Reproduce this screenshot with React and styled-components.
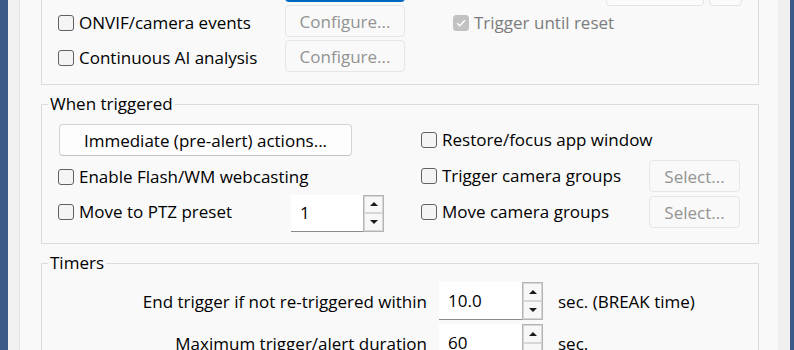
import React from "react";
import styled, { createGlobalStyle } from "styled-components";

const Global = createGlobalStyle`
  html, body { margin: 0; padding: 0; background: #f9f9f9; }
  body {
    font-family: "Open Sans", "Noto Sans", sans-serif;
    font-size: 17px;
    color: #000;
  }
  * { box-sizing: border-box; }
`;

const Window = styled.div`
  display: flex;
  width: 794px;
  height: 350px;
  overflow: hidden;
`;

const Edge = styled.div`
  flex: none;
  width: ${(p) => p.$w}px;
  background: ${(p) => p.$bg};
  ${(p) => (p.$line ? `border-${p.$line}: 1px solid #e4e4e4;` : "")}
`;

const Panel = styled.div`
  flex: 1;
  display: flex;
  flex-direction: column;
  gap: 7px;
  padding: 0 19px 0 21px;
  background: #f9f9f9;
`;

const Group = styled.fieldset`
  margin: 0;
  margin-top: ${(p) => p.$top || 0}px;
  min-width: 0;
  border: 1px solid #dcdcdc;
  padding: ${(p) => p.$pad};
`;

const Legend = styled.legend`
  line-height: 24px;
  padding: 0 2px;
  margin-left: -10px;
`;

const TopGrid = styled.div`
  display: grid;
  grid-template-columns: 227px 168px 153px auto;
  grid-auto-rows: 32px;
  row-gap: 3px;
  align-items: center;
`;

const WhenGrid = styled.div`
  display: grid;
  grid-template-columns: 363px auto;
  grid-auto-rows: 32px;
  row-gap: 4px;
  align-items: center;
`;

const TimerGrid = styled.div`
  display: grid;
  grid-template-columns: 369px 104px auto;
  grid-auto-rows: 38px;
  column-gap: 12px;
  row-gap: 4px;
  align-items: center;
`;

const Line = styled.div`
  display: flex;
  align-items: center;
`;

const Slot = styled.div`
  flex: none;
  width: ${(p) => p.$w}px;
`;

const Label = styled.label`
  display: inline-flex;
  align-items: center;
  gap: 5px;
  white-space: nowrap;
  line-height: 22px;
  margin-top: ${(p) => p.$nudge || 0}px;
  color: ${(p) => (p.$disabled ? "#7c7c7c" : "#000")};
`;

const Box = styled.span`
  flex: none;
  width: 16px;
  height: 16px;
  border-radius: 3px;
  display: flex;
  align-items: center;
  justify-content: center;
  border: 1px solid ${(p) => (p.$disabled ? "#c2c2c2" : "#616161")};
  background: ${(p) => (p.$disabled ? "#c2c2c2" : "#f4f4f4")};
`;

const Button = styled.button`
  height: 32px;
  width: ${(p) => p.$w}px;
  margin-left: ${(p) => p.$ml || 0}px;
  padding: 0;
  border-radius: 4px;
  font: inherit;
  line-height: 1;
  border: 1px solid ${(p) => (p.$disabled ? "#e6e6e6" : "#d3d3d3")};
  border-bottom-color: ${(p) => (p.$disabled ? "#e6e6e6" : "#c2c2c2")};
  background: ${(p) => (p.$disabled ? "#f9f9f9" : "#fdfdfd")};
  color: ${(p) => (p.$disabled ? "#939393" : "#000")};
`;

const FocusButton = styled.div`
  width: 120px;
  height: 32px;
  border: 1px solid #0067c0;
  border-bottom-width: 2px;
  border-radius: 4px;
  background: #fdfdfd;
`;

const LowBoxes = styled.div`
  align-self: end;
  margin-bottom: -4px;
  display: flex;
  gap: 5px;
`;

const Ghost = styled.div`
  width: ${(p) => p.$w}px;
  height: 32px;
  border: 1px solid #e3e3e3;
  border-radius: 4px;
  background: #fbfbfb;
`;

const Spin = styled.div`
  display: flex;
  width: ${(p) => p.$w}px;
  height: ${(p) => p.$h}px;
  margin-top: ${(p) => p.$mt || 0}px;
`;

const Field = styled.div`
  flex: 1;
  display: flex;
  align-items: center;
  padding-left: 9px;
  background: #fff;
  border-bottom: 1px solid #8a8a8a;
`;

const Arrows = styled.div`
  flex: none;
  width: 21px;
  display: flex;
  flex-direction: column;
  border: 1px solid #b4b4b4;
`;

const ArrowBtn = styled.div`
  flex: 1;
  display: flex;
  align-items: center;
  justify-content: center;
  background: #f7f7f7;
  border: 1px solid #d6d6d6;
`;

const Tri = styled.span`
  width: 0;
  height: 0;
  border-left: 4px solid transparent;
  border-right: 4px solid transparent;
  ${(p) =>
    p.$down ? "border-top: 4px solid #1a1a1a;" : "border-bottom: 4px solid #1a1a1a;"}
`;

const TimerLabel = styled.div`
  text-align: right;
  white-space: nowrap;
`;

const Unit = styled.div`
  padding-left: 3px;
  white-space: nowrap;
`;

function Check({ children, disabled, checked, nudge }) {
  return (
    <Label $disabled={disabled} $nudge={nudge}>
      <Box $disabled={disabled}>
        {checked && (
          <svg width="10" height="8" viewBox="0 0 10 8">
            <path d="M1 4.2 L3.8 6.8 L9 1.2" fill="none" stroke="#fff" strokeWidth="1.3" />
          </svg>
        )}
      </Box>
      {children}
    </Label>
  );
}

function Spinner({ value, w, h, mt }) {
  return (
    <Spin $w={w} $h={h} $mt={mt}>
      <Field>{value}</Field>
      <Arrows>
        <ArrowBtn>
          <Tri />
        </ArrowBtn>
        <ArrowBtn>
          <Tri $down />
        </ArrowBtn>
      </Arrows>
    </Spin>
  );
}

export default function App() {
  return (
    <>
      <Global />
      <Window>
        <Edge $w={8} $bg="#3c5a87" />
        <Edge $w={12} $bg="#f0f0f0" $line="right" />
        <Panel>
          <Group $top={-45} $pad="14px 16px 12px">
            <TopGrid>
              <span />
              <FocusButton />
              <span />
              <LowBoxes>
                <Ghost $w={98} />
                <Ghost $w={33} />
              </LowBoxes>

              <Check nudge={3}>ONVIF/camera events</Check>
              <Button $w={120} $disabled>Configure...</Button>
              <Check nudge={3} disabled checked>
                Trigger until reset
              </Check>
              <span />

              <Check nudge={3}>Continuous AI analysis</Check>
              <Button $w={120} $disabled>Configure...</Button>
              <span />
              <span />
            </TopGrid>
          </Group>

          <Group $pad="8px 16px 15px">
            <Legend>When triggered</Legend>
            <WhenGrid>
              <Button $w={293} $ml={1}>Immediate (pre-alert) actions...</Button>
              <Check>Restore/focus app window</Check>

              <Check nudge={2}>Enable Flash/WM webcasting</Check>
              <Line>
                <Slot $w={228}>
                  <Check nudge={2}>Trigger camera groups</Check>
                </Slot>
                <Button $w={91} $disabled>Select...</Button>
              </Line>

              <Line>
                <Slot $w={233}>
                  <Check nudge={1}>Move to PTZ preset</Check>
                </Slot>
                <Spinner value="1" w={93} h={37} mt={2} />
              </Line>
              <Line>
                <Slot $w={228}>
                  <Check nudge={1}>Move camera groups</Check>
                </Slot>
                <Button $w={91} $disabled>Select...</Button>
              </Line>
            </WhenGrid>
          </Group>

          <Group $pad="7px 16px 12px">
            <Legend>Timers</Legend>
            <TimerGrid>
              <TimerLabel>End trigger if not re-triggered within</TimerLabel>
              <Spinner value="10.0" w={104} h={38} />
              <Unit>sec. (BREAK time)</Unit>

              <TimerLabel>Maximum trigger/alert duration</TimerLabel>
              <Spinner value="60" w={104} h={38} />
              <Unit>sec.</Unit>
            </TimerGrid>
          </Group>
        </Panel>
        <Edge $w={12} $bg="#f0f0f0" />
        <Edge $w={9} $bg="#3c5a87" />
      </Window>
    </>
  );
}
